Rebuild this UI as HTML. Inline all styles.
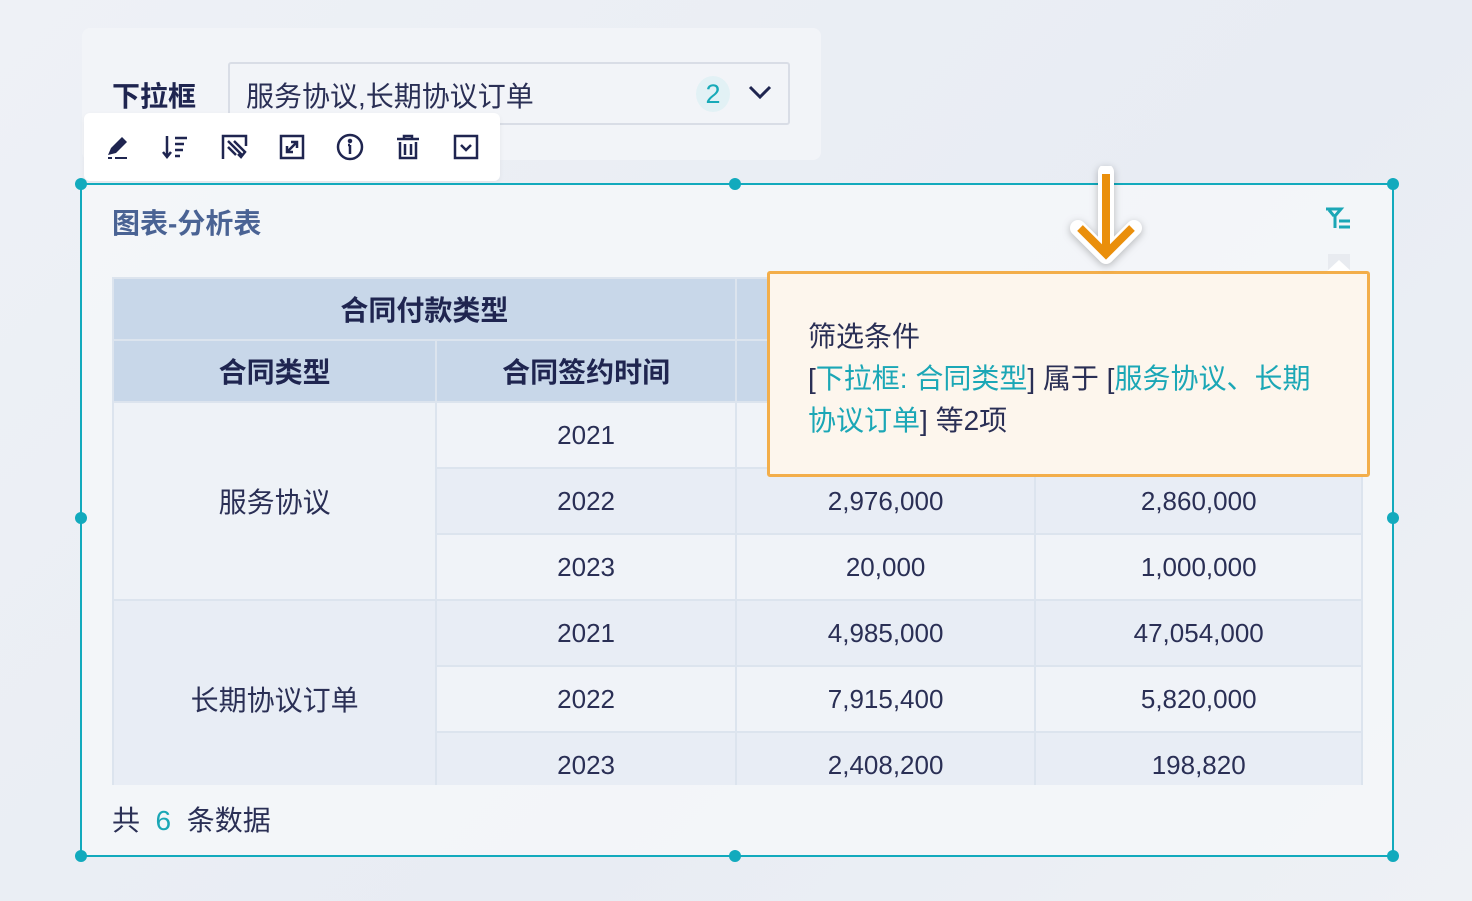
<!DOCTYPE html>
<html><head><meta charset="utf-8"><style>
*{box-sizing:border-box;margin:0;padding:0}
body{width:1472px;height:901px;overflow:hidden;background:linear-gradient(135deg,#eef1f6,#e8ecf3 60%,#eef1f5);font-family:"Liberation Sans","Noto Sans CJK SC",sans-serif;color:#1f2550;position:relative}
.abs{position:absolute}
.panel{left:82px;top:28px;width:739px;height:132px;background:#f2f4f8;border-radius:8px}
.lbl{left:112px;top:75px;font-size:28px;font-weight:bold;color:#1f2550}
.sel{left:228px;top:62px;width:562px;height:63px;border:2px solid #d9dde6;border-radius:3px;background:#f2f4f8}
.sel .t{position:absolute;left:16px;top:11px;font-size:28px;color:#2a2f55}
.badge{position:absolute;left:466px;top:12px;width:34px;height:36px;border-radius:50%;background:#e2f1f5;color:#17aab8;font-size:27px;text-align:center;line-height:36px}
.tb{left:84px;top:113px;width:416px;height:68px;background:#fff;border-radius:6px;box-shadow:0 2px 6px rgba(0,0,0,.05)}
.card{left:80px;top:183px;width:1314px;height:674px;border:2px solid #12aabd;background:rgba(244,246,250,.9)}
.dot{position:absolute;width:12px;height:12px;border-radius:50%;background:#12aabd}
.title{left:112px;top:202px;font-size:28px;font-weight:bold;color:#4a6394}
table{position:absolute;left:112px;top:277px;border-collapse:collapse;table-layout:fixed}
td{border:2px solid #dce4ee;text-align:center;font-size:26px;color:#2a2f55;height:66px}
td.z{font-size:28px}
th{background:#c8d7e9;border:2px solid #dce4ee;font-size:28px;color:#1f2550;height:62px}
.r1 td{background:#f0f3f8}.r2 td{background:#e8edf5}
.foot{left:112px;top:799px;font-size:28px;color:#2a2f55}
.tip{left:767px;top:271px;width:603px;height:206px;background:#fdf6ed;border:3px solid #f3ae4a;border-radius:3px;padding:42px 0 0 38px;font-size:28px;line-height:42px;color:#2a2f55}
.c{color:#1ba7b6}
</style></head><body>
<div class="abs panel"></div>
<div class="abs lbl">下拉框</div>
<div class="abs sel"><span class="t">服务协议,长期协议订单</span><span class="badge">2</span>
<svg style="position:absolute;left:518px;top:20px" width="24" height="16" viewBox="0 0 24 16"><path d="M2 3l10 10 10-10" fill="none" stroke="#1f2550" stroke-width="3"/></svg></div>
<div class="abs tb">
<svg class="abs" style="left:20px;top:20px" width="28" height="28" viewBox="0 0 28 28" fill="#1f2550"><path d="M4 22l3-7 11-11 5 5-11 11z"/><rect x="4" y="24" width="4" height="2"/><rect x="11" y="24" width="12" height="2"/></svg>
<svg class="abs" style="left:78px;top:20px" width="28" height="28" viewBox="0 0 28 28" fill="none" stroke="#1f2550" stroke-width="2.5"><path d="M5 3v21M1 19l4 5 4-5M13 5h12M13 11h9M13 17h8M13 23h5"/></svg>
<svg class="abs" style="left:136px;top:20px" width="28" height="28" viewBox="0 0 28 28" fill="none" stroke="#1f2550" stroke-width="2.5"><path d="M3 26V3h23v10M8 8l14 14M8 14l8 8M14 8l7 7 4 4-4 5-3-3"/></svg>
<svg class="abs" style="left:194px;top:20px" width="28" height="28" viewBox="0 0 28 28" fill="none" stroke="#1f2550" stroke-width="2.5"><rect x="3" y="3" width="22" height="22"/><path d="M9 19l10-10M13 9h6v6M9 13v6h6"/></svg>
<svg class="abs" style="left:252px;top:20px" width="28" height="28" viewBox="0 0 28 28" fill="none" stroke="#1f2550" stroke-width="2.5"><circle cx="14" cy="14" r="12"/><path d="M14 12v9M12 12h2"/><circle cx="14" cy="8" r="1" fill="#1f2550"/></svg>
<svg class="abs" style="left:310px;top:20px" width="28" height="28" viewBox="0 0 28 28" fill="none" stroke="#1f2550" stroke-width="2.5"><path d="M3 6h22M10 6V3h8v3M6 9v16h16V9M11 11v11M17 11v11"/></svg>
<svg class="abs" style="left:368px;top:20px" width="28" height="28" viewBox="0 0 28 28" fill="none" stroke="#1f2550" stroke-width="2.5"><rect x="3" y="3" width="22" height="22"/><path d="M9 12l5 5 5-5"/></svg>
</div>
<div class="abs card"></div>
<div class="dot" style="left:75px;top:178px"></div><div class="dot" style="left:729px;top:178px"></div><div class="dot" style="left:1387px;top:178px"></div>
<div class="dot" style="left:75px;top:512px"></div><div class="dot" style="left:1387px;top:512px"></div>
<div class="dot" style="left:75px;top:850px"></div><div class="dot" style="left:729px;top:850px"></div><div class="dot" style="left:1387px;top:850px"></div>
<div class="abs title">图表-分析表</div>
<svg class="abs" style="left:1324px;top:207px" width="28" height="24" viewBox="0 0 28 24" fill="none" stroke="#1ba7b6" stroke-width="3"><path d="M2 2h15l-6 7v12M5 3l5 6"/><path d="M15 14h11M15 20h11"/></svg>
<div style="position:absolute;left:112px;top:277px;width:1251px;height:508px;overflow:hidden">
<table style="left:0;top:0">
<colgroup><col width="324"><col width="300"><col width="300"><col width="327"></colgroup>
<tr><th colspan="2">合同付款类型</th><th colspan="2"></th></tr>
<tr><th>合同类型</th><th>合同签约时间</th><th></th><th></th></tr>
<tr class="r1"><td class="z" rowspan="3" style="background:#eef2f7">服务协议</td><td>2021</td><td></td><td></td></tr>
<tr class="r2"><td>2022</td><td>2,976,000</td><td>2,860,000</td></tr>
<tr class="r1"><td>2023</td><td>20,000</td><td>1,000,000</td></tr>
<tr class="r2"><td class="z" rowspan="3" style="background:#e8edf5">长期协议订单</td><td>2021</td><td>4,985,000</td><td>47,054,000</td></tr>
<tr class="r1"><td>2022</td><td>7,915,400</td><td>5,820,000</td></tr>
<tr class="r2"><td>2023</td><td>2,408,200</td><td>198,820</td></tr>
</table></div>
<div class="abs foot">共 <span class="c">&nbsp;6</span>&nbsp; 条数据</div>
<div class="abs" style="left:1328px;top:254px;width:22px;height:18px;background:#e8ebf0"></div>
<svg class="abs" style="left:1326px;top:258px" width="26" height="14"><path d="M0 14L13 2 26 14z" fill="#fff"/></svg>
<div class="abs tip">筛选条件<br>[<span class="c">下拉框: 合同类型</span>] 属于 [<span class="c">服务协议、长期<br>协议订单</span>] 等2项</div>
<svg class="abs" style="left:1068px;top:166px;filter:drop-shadow(0 2px 4px rgba(0,0,0,.25))" width="76" height="100" viewBox="0 0 76 100"><path d="M38 6v80M10 62l28 28 28-28" fill="none" stroke="#fff" stroke-width="16" stroke-linejoin="round" stroke-linecap="round"/><path d="M38 8v78M12 62l26 26 26-26" fill="none" stroke="#ea8f0b" stroke-width="8"/></svg>
</body></html>
